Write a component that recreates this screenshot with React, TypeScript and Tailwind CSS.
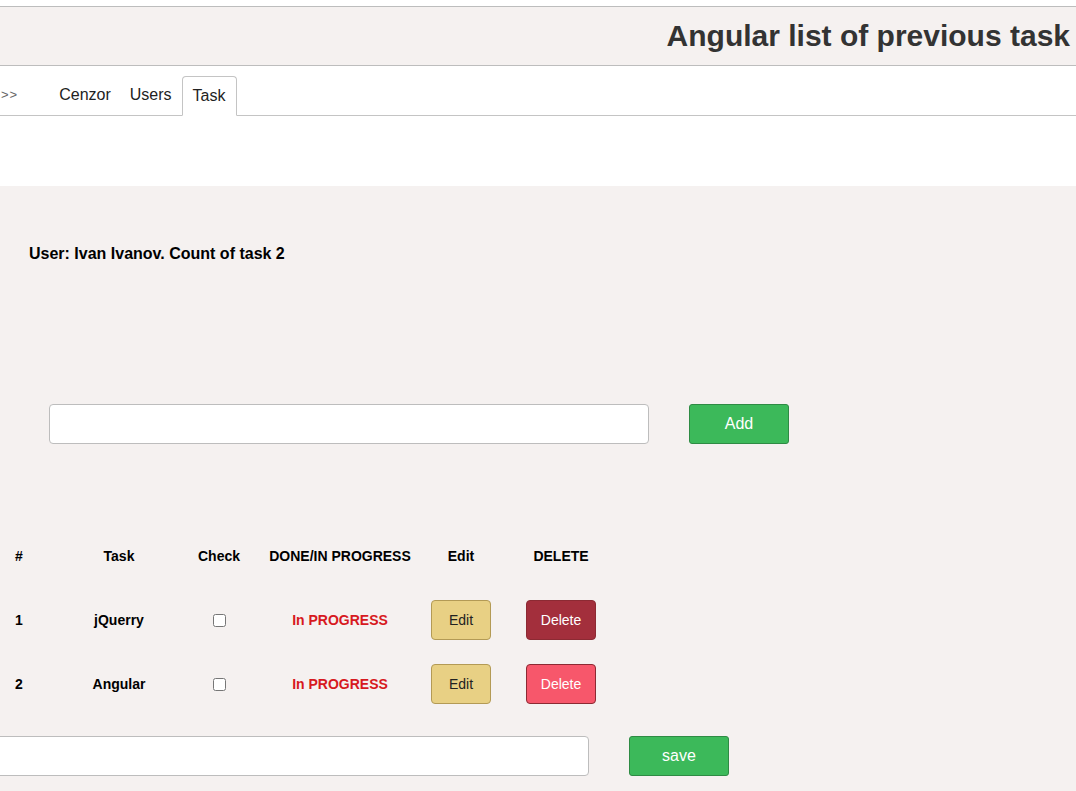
import React from "react";

const tasks = [
  { id: 1, name: "jQuerry", del: "bg-[#a32f3c]" },
  { id: 2, name: "Angular", del: "bg-[#f7576b]" },
];

export default function App() {
  return (
    <div className="min-h-[791px] w-[1076px] overflow-hidden bg-[#f5f1f0] font-['Liberation_Sans',Arial,sans-serif] text-black">
      {/* Header */}
      <div className="h-[6px] bg-white" />
      <header className="flex h-[60px] items-center justify-end border-y border-[#bdbdbd] bg-[#f5f1f0] pr-[6px]">
        <h1 className="text-[30px] font-bold leading-none text-[#333]">Angular list of previous task</h1>
      </header>

      {/* Tabs */}
      <nav className="flex h-[50px] items-end border-b border-[#c4c4c4] bg-white">
        <span className="mb-[11px] ml-[1px] mr-[39px] text-[13px] tracking-[1px] text-[#666]">&gt;&gt;</span>
        <span className="mb-[8px] px-[2px] text-[16px] text-[#222]">Cenzor</span>
        <span className="mb-[8px] ml-[17px] text-[16px] text-[#222]">Users</span>
        <span className="-mb-px ml-[10px] flex h-[40px] w-[55px] items-center justify-center rounded-t-[4px] border border-b-white border-[#c4c4c4] bg-white text-[16px] text-[#222]">
          Task
        </span>
      </nav>
      <div className="h-[70px] bg-white" />

      {/* Body */}
      <section className="pt-[59px]">
        <p className="pl-[29px] text-[16px] font-bold leading-[18px]">User: Ivan Ivanov. Count of task 2</p>

        <div className="mt-[141px] flex items-center pl-[49px]">
          <input className="h-[40px] w-[600px] rounded-[4px] border border-[#bdbdbd] bg-white outline-none" />
          <button className="ml-[40px] h-[40px] w-[100px] rounded-[3px] border border-[#2e8b44] bg-[#3cb95a] text-[16px] text-white">
            Add
          </button>
        </div>

        {/* Table */}
        <div className="mt-[80px] grid grid-cols-[38px_162px_38px_204px_38px_162px] text-[14px] font-bold">
          {["#", "Task", "Check", "DONE/IN PROGRESS", "Edit", "DELETE"].map((h) => (
            <div key={h} className="flex h-[64px] items-center justify-center whitespace-nowrap">
              {h}
            </div>
          ))}
          {tasks.map((t) => (
            <React.Fragment key={t.id}>
              <div className="flex h-[64px] items-center justify-center">{t.id}</div>
              <div className="flex h-[64px] items-center justify-center">{t.name}</div>
              <div className="flex h-[64px] items-center justify-center">
                <input type="checkbox" className="h-[13px] w-[13px]" />
              </div>
              <div className="flex h-[64px] items-center justify-center whitespace-nowrap text-[#d71920]">In PROGRESS</div>
              <div className="flex h-[64px] items-center justify-center">
                <button className="h-[40px] w-[60px] shrink-0 rounded-[4px] border border-[#b39a55] bg-[#e8d084] text-[14px] font-normal text-[#222]">
                  Edit
                </button>
              </div>
              <div className="flex h-[64px] items-center justify-center">
                <button className={`h-[40px] w-[70px] shrink-0 rounded-[4px] border border-[#8c2a33] ${t.del} text-[14px] font-normal text-white`}>
                  Delete
                </button>
              </div>
            </React.Fragment>
          ))}
        </div>

        <div className="mt-[20px] flex items-center pb-[16px]">
          <input className="-ml-[11px] h-[40px] w-[600px] shrink-0 rounded-[4px] border border-[#bdbdbd] bg-white outline-none" />
          <button className="ml-[40px] h-[40px] w-[100px] rounded-[3px] border border-[#2e8b44] bg-[#3cb95a] text-[16px] text-white">
            save
          </button>
        </div>
      </section>
    </div>
  );
}
